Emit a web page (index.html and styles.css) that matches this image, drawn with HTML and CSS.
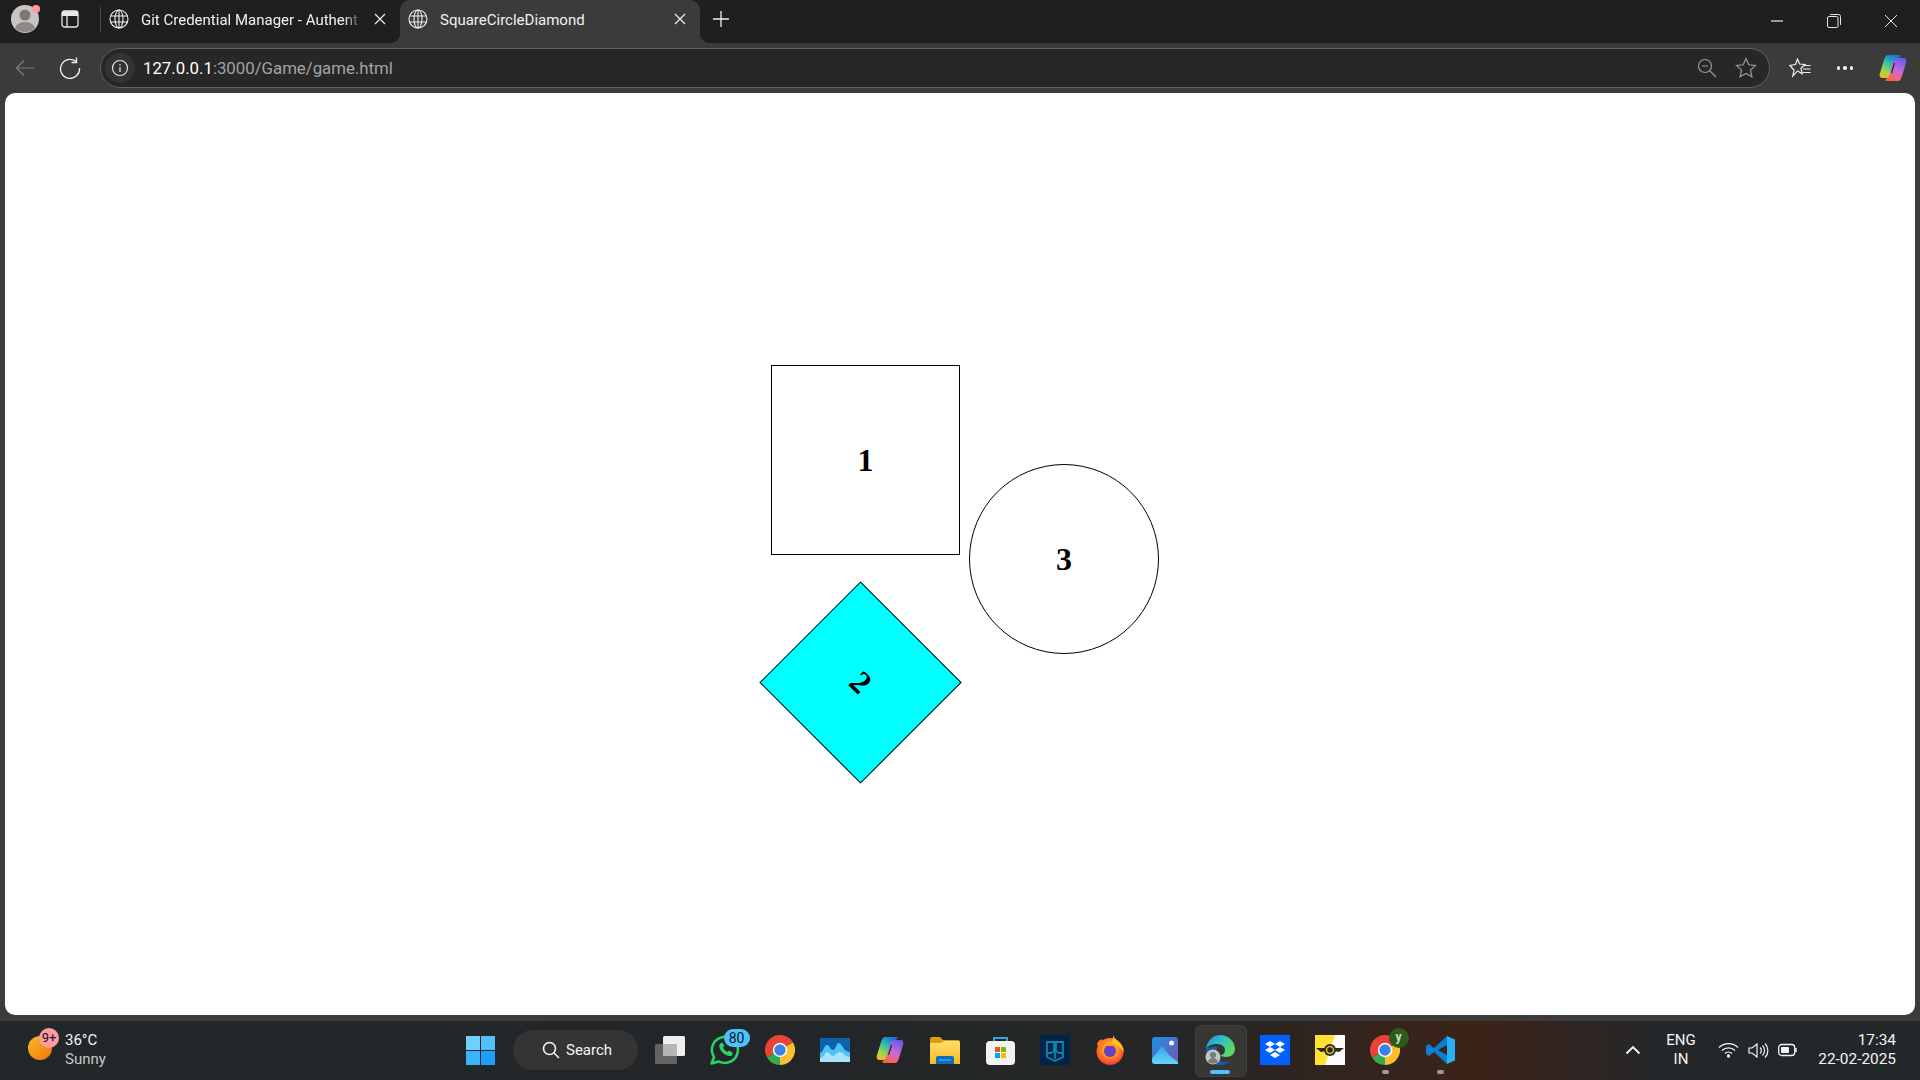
FILE: index.html
```html
<!DOCTYPE html>
<html lang="en">
  <head>
    <meta charset="UTF-8" />
    <title>SquareCircleDiamond</title>
    <link rel="stylesheet" href="styles.css">
  </head>
  <body>
    <svg class="defs" aria-hidden="true">
      <defs>
        <linearGradient id="cp-left" x1="0.7" y1="0" x2="0.2" y2="1">
          <stop offset="0" stop-color="#1b6fe0" />
          <stop offset="0.4" stop-color="#2cc3a5" />
          <stop offset="0.75" stop-color="#a6d83c" />
          <stop offset="1" stop-color="#f5b52e" />
        </linearGradient>
        <linearGradient id="cp-right" x1="0.7" y1="0" x2="0.3" y2="1">
          <stop offset="0" stop-color="#6a5ce8" />
          <stop offset="0.5" stop-color="#c469dc" />
          <stop offset="0.8" stop-color="#f0648c" />
          <stop offset="1" stop-color="#f5692a" />
        </linearGradient>
        <linearGradient id="edge-top" x1="0" y1="0" x2="1" y2="0.6">
          <stop offset="0" stop-color="#1b8fd8" />
          <stop offset="0.5" stop-color="#2fc0c8" />
          <stop offset="1" stop-color="#62d85e" />
        </linearGradient>
        <linearGradient id="ph-bg" x1="0" y1="0" x2="1" y2="1">
          <stop offset="0" stop-color="#1a8fe8" />
          <stop offset="1" stop-color="#7a55b0" />
        </linearGradient>
        <linearGradient id="ph-mt" x1="0" y1="0" x2="0" y2="1">
          <stop offset="0" stop-color="#3aa0e8" />
          <stop offset="1" stop-color="#62d8f8" />
        </linearGradient>
        <linearGradient id="folder" x1="0" y1="0" x2="0" y2="1">
          <stop offset="0" stop-color="#ffdf70" />
          <stop offset="1" stop-color="#f6b91e" />
        </linearGradient>
        <radialGradient id="fox" cx="0.5" cy="0.4" r="0.65">
          <stop offset="0.3" stop-color="#ffb020" />
          <stop offset="0.75" stop-color="#ff5a28" />
          <stop offset="1" stop-color="#e3206e" />
        </radialGradient>
        <symbol id="globe" viewBox="0 0 20 20">
          <g fill="none" stroke="currentColor" stroke-width="1.1">
            <circle cx="10" cy="10" r="9" />
            <ellipse cx="10" cy="10" rx="4" ry="9" />
            <path d="M10 1v18M1.6 7h16.8M1.6 13h16.8" />
          </g>
        </symbol>
        <symbol id="close" viewBox="0 0 12 12">
          <path d="M1 1l10 10M11 1L1 11" fill="none" stroke="currentColor" stroke-width="1.2" />
        </symbol>
        <symbol id="copilot" viewBox="0 0 28 28">
          <path fill="url(#cp-left)" d="M9 1h11c2 0 2 1 1 2-2 1-3 3-4 6l-3 12c-1 2-3 3-6 3H4c-3 0-4-2-3-5L5 6c1-3 2-5 4-5z" />
          <path fill="url(#cp-right)" d="M19 27H8c-2 0-2-1-1-2 2-1 3-3 4-6l3-12c1-2 3-3 6-3h4c3 0 4 2 3 5l-4 13c-1 3-2 5-4 5z" />
          <path fill="none" stroke="#2a2a2a" stroke-width="1.2" d="M15.500 9L12.500 19" />
        </symbol>
        <symbol id="chrome" viewBox="0 0 30 30">
          <path fill="#ea4335" d="M15 15L2 22.500A15 15 0 0 1 28 7.500z" />
          <path fill="#fbc02d" d="M15 15L28 7.500A15 15 0 0 1 15 30z" />
          <path fill="#34a853" d="M15 15L15 30A15 15 0 0 1 2 22.500z" />
          <circle cx="15" cy="15" r="7.200" fill="#fff" />
          <circle cx="15" cy="15" r="5.700" fill="#3f7fe8" />
        </symbol>
      </defs>
    </svg>

    <div id="wrap">
      <div class="tabs">
        <div class="cell-avatar">
          <svg width="30" height="30" viewBox="0 0 30 30">
            <circle cx="14" cy="15" r="14" fill="#c9c6c1" />
            <circle cx="14" cy="11" r="5.500" fill="#7d7873" />
            <path fill="#8f8a85" d="M4 24c2-5 6-6 10-6s8 1 10 6c-3 3-6 4-10 4s-7-1-10-4z" />
            <circle cx="25" cy="5" r="4" fill="#ff9a9e" />
          </svg>
        </div>
        <div class="cell-tabstrip">
          <svg width="18" height="18" viewBox="0 0 18 18">
            <rect x="1" y="1" width="16" height="16" rx="2.500" fill="none" stroke="#e8e8e8" stroke-width="1.300" />
            <path fill="#e8e8e8" d="M1 3.500A2.500 2.500 0 0 1 3.500 1h11A2.500 2.500 0 0 1 17 3.500V6H1z" />
            <path stroke="#e8e8e8" stroke-width="1.300" d="M6 6v11" />
          </svg>
        </div>
        <div class="tab-sep"></div>
        <div class="tab">
          <svg class="tab-globe"><use href="#globe" /></svg>
          <span class="tab-title tab-title-fade">Git Credential Manager - Authent</span>
          <svg class="tab-close"><use href="#close" /></svg>
        </div>
        <div class="tab tab-active">
          <svg class="tab-globe"><use href="#globe" /></svg>
          <span class="tab-title">SquareCircleDiamond</span>
          <svg class="tab-close"><use href="#close" /></svg>
        </div>
        <svg class="tab-new" viewBox="0 0 18 18">
          <path d="M9 1v16M1 9h16" fill="none" stroke="#efefef" stroke-width="1.300" />
        </svg>
        <div class="win-btns">
          <div class="win-btn">
            <svg width="14" height="14" viewBox="0 0 14 14"><path d="M1 7h12" stroke="#fff" stroke-width="1.100" /></svg>
          </div>
          <div class="win-btn">
            <svg width="14" height="14" viewBox="0 0 14 14" fill="none" stroke="#e8e8e8" stroke-width="1">
              <rect x="0.500" y="2.500" width="10.500" height="11" rx="1.500" />
              <path d="M3 .5h8.500a2 2 0 0 1 2 2V11" />
            </svg>
          </div>
          <div class="win-btn">
            <svg width="14" height="14" viewBox="0 0 14 14"><path d="M1 1l12 12M13 1L1 13" stroke="#e8e8e8" stroke-width="1" /></svg>
          </div>
        </div>
      </div>

      <div class="toolbar">
        <div class="tool-back">
          <svg width="20" height="18" viewBox="0 0 20 18" fill="none" stroke="#7d7d7d" stroke-width="1.200">
            <path d="M19 9H1.500M9 1.500L1.500 9 9 16.500" />
          </svg>
        </div>
        <div class="tool-reload">
          <svg width="22" height="22" viewBox="0 0 22 22" fill="none" stroke="#f0f0f0" stroke-width="1.300">
            <path d="M17 4.500A9.500 9.500 0 1 0 20.500 11" />
            <path d="M12.500 5.500h5v-5" />
          </svg>
        </div>
        <div class="address">
          <div class="addr-info">
            <svg width="18" height="18" viewBox="0 0 18 18" fill="none" stroke="#e4e4e4" stroke-width="1.200">
              <circle cx="9" cy="9" r="7.500" />
              <path d="M9 8v5M9 5v1.400" />
            </svg>
          </div>
          <div class="addr-url"><span class="addr-host">127.0.0.1</span>:3000/Game/game.html</div>
          <div class="addr-icons">
            <svg width="20" height="20" viewBox="0 0 20 20" fill="none" stroke="#9a9a9a" stroke-width="1.200">
              <circle cx="8" cy="8" r="6.500" />
              <path d="M5 8h6M13 13l6 6" />
            </svg>
            <svg width="22" height="22" viewBox="0 0 22 22" fill="none" stroke="#9a9a9a" stroke-width="1.200">
              <path d="M11 1.500l2.800 6.300 6.700.7-5 4.600 1.400 6.700-5.900-3.400-5.900 3.400 1.400-6.700-5-4.600 6.700-.7z" />
            </svg>
          </div>
        </div>
        <div class="tool-fav">
          <svg width="22" height="20" viewBox="0 0 22 20" fill="none" stroke="#f0f0f0" stroke-width="1.200">
            <path d="M8.500 1l2 5 5.500.5-4 3.800 1.200 5.400-4.700-2.800L3.800 18 5 12 .8 7.500 6.500 6.500z" />
            <path d="M15 7.500h6.500M14 11h7.500M13.500 14.500h8" />
          </svg>
        </div>
        <div class="tool-more">
          <span class="dot"></span><span class="dot"></span><span class="dot"></span>
        </div>
        <div class="tool-copilot">
          <svg width="28" height="28"><use href="#copilot" /></svg>
        </div>
      </div>

      <div class="page">
        <div class="shape square">1</div>
        <div class="shape diamond">2</div>
        <div class="shape circle">3</div>
      </div>

      <div class="taskbar">
        <div class="weather">
          <div class="weather-icon">
            <span class="weather-sun"></span>
            <span class="weather-badge">9+</span>
          </div>
          <div class="weather-text">
            <div>36°C</div>
            <div class="weather-sub">Sunny</div>
          </div>
        </div>

        <div class="apps">
          <div class="app">
            <svg width="29" height="29" viewBox="0 0 29 29">
              <rect width="14" height="14" fill="#6fd0fb" />
              <rect x="15" width="14" height="14" fill="#52c0fb" />
              <rect y="15" width="14" height="14" fill="#3ab4fb" />
              <rect x="15" y="15" width="14" height="14" fill="#1a9ffa" />
            </svg>
          </div>
          <div class="search">
            <svg width="18" height="18" viewBox="0 0 18 18" fill="none" stroke="#f4f4f4" stroke-width="1.600">
              <circle cx="7.500" cy="7.500" r="6" />
              <path d="M12 12l5 5" />
            </svg>
            <span>Search</span>
          </div>
          <div class="app">
            <svg width="30" height="28" viewBox="0 0 30 28">
              <rect y="8" width="22" height="20" rx="1.500" fill="#636363" />
              <rect x="8" width="22" height="20" rx="1.500" fill="#efefef" />
              <rect x="8" y="8" width="14" height="12" fill="#b5b5b5" />
            </svg>
          </div>
          <div class="app">
            <svg width="30" height="30" viewBox="0 0 30 30">
              <path fill="none" stroke="#25d366" stroke-width="2.500" stroke-linejoin="round" d="M1.500 28.500L4 22A13 13 0 1 1 9 26.500z" />
              <path fill="#25d366" d="M10 8.500c-1.500 2-.5 6 2.500 9s7 4.500 9.500 3l.5-3-3.500-2-1.500 1.500c-2-.8-3.500-2.500-4.500-4.500l1.500-1.500-2-3.500z" />
            </svg>
            <span class="badge badge-count">80</span>
          </div>
          <div class="app">
            <svg width="30" height="30"><use href="#chrome" /></svg>
          </div>
          <div class="app">
            <svg width="30" height="24" viewBox="0 0 30 24">
              <rect width="30" height="24" fill="#0b62ad" />
              <path fill="#4fc1f2" d="M0 15c3 0 4-8 7-8s3 5 6 5 3-7 6-7 4 9 11 9v10H0z" />
              <path fill="#a9e4fb" d="M0 20c4 0 5-6 7-6s4 4 6 4 4-4 7-4 5 5 10 5v5H0z" />
            </svg>
          </div>
          <div class="app">
            <svg width="28" height="28"><use href="#copilot" /></svg>
          </div>
          <div class="app">
            <svg width="30" height="27" viewBox="0 0 30 27">
              <path fill="#d99f0d" d="M0 2a2 2 0 0 1 2-2h8l3 3h15a2 2 0 0 1 2 2v6H0z" />
              <path fill="url(#folder)" d="M0 6h11l3-2h14a2 2 0 0 1 2 2v21H0z" />
              <path fill="#0f6cbd" d="M6 27v-6a2 2 0 0 1 2-2h14a2 2 0 0 1 2 2v6z" />
              <path stroke="#5ab4ee" d="M9 23h12" />
            </svg>
          </div>
          <div class="app">
            <svg width="29" height="29" viewBox="0 0 29 29">
              <path fill="none" stroke="#2aa8e8" stroke-width="2" d="M8 6V2h13v4" />
              <rect y="5" width="29" height="24" rx="4" fill="#f2f2f2" />
              <rect x="9" y="11" width="5" height="5" fill="#f25022" />
              <rect x="15" y="11" width="5" height="5" fill="#7fba00" />
              <rect x="9" y="17" width="5" height="5" fill="#00a4ef" />
              <rect x="15" y="17" width="5" height="5" fill="#ffb900" />
            </svg>
          </div>
          <div class="app">
            <svg width="30" height="30" viewBox="0 0 30 30">
              <rect width="30" height="30" fill="#02234a" />
              <path fill="none" stroke="#0e86ad" stroke-width="1.800" d="M7 7h7v9l-3 2H7zM16 7h7v11h-4l-3-2zM15 7v17M7 18v4l8 4 8-4v-4" />
            </svg>
          </div>
          <div class="app">
            <svg width="30" height="30" viewBox="0 0 30 30">
              <circle cx="15" cy="16.500" r="13.500" fill="url(#fox)" />
              <path fill="#ffc21e" d="M18 0c1 5 10 7 11 17-3-4-8-8-13-8 2-3 2-6 2-9z" />
              <path fill="#ff7a1e" d="M2 9c1-3 3-4 5-5 0 2 1 3 3 4l-5 7z" />
              <circle cx="15" cy="16" r="6" fill="#6b3fc8" />
              <path fill="#ff9a1e" d="M8 11c4-3 9-3 13 0-4 0-9 0-13 0z" />
            </svg>
          </div>
          <div class="app">
            <svg width="26" height="27" viewBox="0 0 26 27">
              <rect width="26" height="27" rx="3" fill="url(#ph-bg)" />
              <circle cx="19.500" cy="6" r="2.500" fill="#eef4fb" />
              <path fill="url(#ph-mt)" d="M0 22l10-13 8 10 8 6v-1 3H3a3 3 0 0 1-3-3z" />
            </svg>
          </div>
          <div class="app app-open">
            <svg width="30" height="30" viewBox="0 0 30 30">
              <path fill="url(#edge-top)" d="M1 14C2 6 8 0 15 0c9 0 15 7 15 14 0 5-4 8-9 8-3 0-5-1-6-2 3 0 5-2 5-5 0-3-3-6-8-6C8 9 3 10 1 14z" />
              <path fill="#0f5fb0" d="M1 14c-1 9 6 16 14 16 4 0 7-1 10-4-5 2-12 1-14-5-1-4 0-6 2-9-5 0-10 0-12 2z" />
              <circle cx="8" cy="22" r="7.500" fill="#c4c4c4" />
              <circle cx="8" cy="20" r="3" fill="#7a7a7a" />
              <path fill="#7a7a7a" d="M3 27c1-3 3-4 5-4s4 1 5 4c-3 2-7 2-10 0z" />
            </svg>
            <span class="app-bar"></span>
          </div>
          <div class="app">
            <svg width="30" height="30" viewBox="0 0 30 30">
              <rect width="30" height="30" fill="#0061fe" />
              <path fill="#fff" d="M10 6l5 3-5 3-5-3zM20 6l5 3-5 3-5-3zM10 12l5 3-5 3-5-3zM20 12l5 3-5 3-5-3zM15 17l5 3-5 3-5-3z" />
            </svg>
          </div>
          <div class="app">
            <svg width="30" height="30" viewBox="0 0 30 30">
              <rect width="30" height="30" fill="#fbfdfb" />
              <path fill="#ffe135" d="M0 0h20L10 30H0z" />
              <path fill="#2b2a1e" d="M1 13h10v3l-5 1zM29 13H19v3l5 1z" />
              <circle cx="15" cy="15" r="6" fill="#2b2a1e" />
              <circle cx="15" cy="15" r="3.500" fill="none" stroke="#d9b62e" stroke-width="1.500" />
            </svg>
          </div>
          <div class="app">
            <svg width="30" height="30"><use href="#chrome" /></svg>
            <span class="badge badge-profile">y</span>
            <span class="app-dot"></span>
          </div>
          <div class="app">
            <svg width="30" height="30" viewBox="0 0 30 30">
              <path fill="#0a7ed0" d="M22 1L9 13 4 9 1 11v8l3 2 5-4 13 12 2-8-11-6 11-6z" />
              <path fill="#2aaef5" d="M22 1l8 3.500v21L22 29z" />
            </svg>
            <span class="app-dot"></span>
          </div>
        </div>

        <div class="tray">
          <div class="tray-chev">
            <svg width="16" height="10" viewBox="0 0 16 10" fill="none" stroke="#f4f4f4" stroke-width="1.800">
              <path d="M1.500 8.500L8 2l6.500 6.500" />
            </svg>
          </div>
          <div class="tray-lang">ENG<br />IN</div>
          <div class="tray-icon">
            <svg width="21" height="16" viewBox="0 0 21 16" fill="none" stroke="#f4f4f4" stroke-width="1.300">
              <path d="M1 5.500a13.500 13.500 0 0 1 19 0M4 8.500a9.500 9.500 0 0 1 13 0M7 11.500a5 5 0 0 1 7 0" />
              <circle cx="10.500" cy="14" r="1" fill="#f4f4f4" />
            </svg>
          </div>
          <div class="tray-icon">
            <svg width="21" height="17" viewBox="0 0 21 17" fill="none" stroke="#f4f4f4" stroke-width="1.200">
              <path d="M1 6v5h3l5 4V2L4 6z" />
              <path d="M12 5.500a4 4 0 0 1 0 6M14.500 3.500a7 7 0 0 1 0 10M17 1.500a10 10 0 0 1 0 14" />
            </svg>
          </div>
          <div class="tray-icon">
            <svg width="20" height="14" viewBox="0 0 20 14">
              <rect x="0.700" y="1.500" width="16" height="11" rx="3" fill="none" stroke="#f4f4f4" stroke-width="1.300" />
              <rect x="3" y="4" width="8" height="6" rx="1" fill="#f4f4f4" />
              <path d="M18 5v4" stroke="#f4f4f4" stroke-width="1.500" />
            </svg>
          </div>
          <div class="tray-clock">17:34<br />22-02-2025</div>
        </div>
      </div>
    </div>
  </body>
</html>
```
FILE: styles.css
```css
* {
  box-sizing: border-box;
}
html,
body {
  margin: 0;
  padding: 0;
  font-family: Roboto, sans-serif;
}
.defs {
  position: absolute;
  width: 0;
  height: 0;
}
#wrap {
  display: flex;
  flex-direction: column;
  width: 1920px;
  height: 1080px;
  background: #3b3b3b;
  overflow: hidden;
}

/* tab strip */
.tabs {
  display: flex;
  align-items: stretch;
  flex: 0 0 43px;
  background: #1f1f1f;
  color: #f0f0f0;
}
.cell-avatar,
.cell-tabstrip {
  display: flex;
  align-items: center;
  justify-content: center;
  padding-bottom: 5px;
}
.cell-avatar {
  width: 50px;
  padding-left: 1px;
}
.cell-tabstrip {
  width: 40px;
}
.tab-sep {
  align-self: center;
  width: 1px;
  height: 25px;
  margin: 0 0 5px 10px;
  background: #4b4b4b;
}
.tab {
  position: relative;
  display: flex;
  align-items: center;
  width: 296px;
  padding: 0 11px 5px 8px;
  font-size: 15px;
}
.tab-active {
  width: 300px;
  margin-left: 3px;
  padding-right: 14px;
  background: #3b3b3b;
  border-radius: 10px 10px 0 0;
}
.tab-active:before,
.tab-active:after {
  content: '';
  position: absolute;
  bottom: 0;
  width: 10px;
  height: 10px;
}
.tab-active:before {
  left: -10px;
  background: radial-gradient(circle at 0 0, transparent 10px, #3b3b3b 10.5px);
}
.tab-active:after {
  right: -10px;
  background: radial-gradient(circle at 100% 0, transparent 10px, #3b3b3b 10.5px);
}
.tab-globe {
  flex: 0 0 20px;
  width: 20px;
  height: 20px;
  margin-right: 12px;
}
.tab-title {
  flex: 1;
  margin-top: 1px;
  white-space: nowrap;
}
.tab-title-fade {
  -webkit-mask-image: linear-gradient(to right, #000 92%, transparent 100%);
  mask-image: linear-gradient(to right, #000 92%, transparent 100%);
}
.tab-close {
  flex: 0 0 12px;
  width: 12px;
  height: 12px;
  margin-left: 12px;
}
.tab-new {
  align-self: center;
  width: 18px;
  height: 18px;
  margin: 0 0 5px 12px;
}
.win-btns {
  display: flex;
  margin-left: auto;
}
.win-btn {
  display: flex;
  align-items: center;
  justify-content: center;
  width: 57px;
  padding-bottom: 1px;
}
.win-btn:last-child {
  width: 58px;
}

/* toolbar */
.toolbar {
  display: flex;
  align-items: center;
  flex: 0 0 50px;
  padding-left: 5px;
}
.tool-back,
.tool-reload,
.tool-fav,
.tool-more,
.tool-copilot {
  display: flex;
  align-items: center;
  justify-content: center;
  flex-shrink: 0;
}
.tool-back {
  width: 40px;
}
.tool-reload {
  width: 50px;
  margin-right: 5px;
}
.address {
  display: flex;
  align-items: center;
  flex-shrink: 0;
  width: 1670px;
  height: 40px;
  padding: 0 8px 0 4px;
  border: 1px solid #606060;
  border-radius: 20px;
  background: #272727;
}
.addr-info {
  display: flex;
  align-items: center;
  justify-content: center;
  width: 30px;
  height: 30px;
  border-radius: 50%;
  background: #333;
}
.addr-url {
  margin-left: 8px;
  font-size: 16.8px;
  color: #a3a3a3;
}
.addr-host {
  color: #fff;
}
.addr-icons {
  display: flex;
  align-items: center;
  gap: 18px;
  margin-left: auto;
  padding-right: 4px;
}
.tool-fav {
  width: 60px;
}
.tool-more {
  gap: 3px;
  width: 30px;
}
.dot {
  width: 3.5px;
  height: 3.5px;
  border-radius: 50%;
  background: #f0f0f0;
}
.tool-copilot {
  width: 60px;
  padding-left: 6px;
}

/* page in the browser */
.page {
  position: relative;
  flex: 0 0 922px;
  margin: 0 5px 6px;
  background: #fff;
  border-radius: 10px;
}
.shape {
  position: absolute;
  display: flex;
  align-items: center;
  justify-content: center;
  border: 1px solid #000;
  font-family: 'Liberation Serif', serif;
  font-size: 32px;
  font-weight: bold;
  color: #000;
}
.square {
  left: 766px;
  top: 272px;
  width: 189px;
  height: 190px;
}
.circle {
  left: 964px;
  top: 371px;
  width: 190px;
  height: 190px;
  border-radius: 50%;
}
.diamond {
  left: 784px;
  top: 518px;
  width: 143px;
  height: 143px;
  background: #0ff;
  transform: rotate(45deg);
}

/* taskbar */
.taskbar {
  display: flex;
  align-items: center;
  flex: 0 0 59px;
  padding-bottom: 1px;
  color: #f4f4f4;
  background: linear-gradient(to right, #22272a 0, #242627 1180px, #3a2319 1450px, #3a2319 1490px, #24272a 1660px, #22272a 100%);
}
.weather {
  display: flex;
  align-items: center;
  width: 453px;
  padding-left: 28px;
}
.weather-icon {
  position: relative;
  width: 37px;
  height: 40px;
}
.weather-sun {
  position: absolute;
  left: 0;
  top: 6px;
  width: 24px;
  height: 24px;
  border-radius: 50%;
  background: linear-gradient(135deg, #f3c022, #f4720f);
}
.weather-badge {
  position: absolute;
  left: 11px;
  top: -2px;
  width: 20px;
  height: 20px;
  border-radius: 50%;
  background: #ff99a4;
  color: #111;
  font-size: 13px;
  line-height: 20px;
  text-align: center;
}
.weather-text {
  font-size: 15px;
  line-height: 19px;
}
.weather-sub {
  color: #c8c8c8;
}
.apps {
  display: flex;
  align-items: center;
}
.app {
  position: relative;
  display: flex;
  align-items: center;
  justify-content: center;
  width: 55px;
  height: 50px;
}
.app-open:before {
  content: '';
  position: absolute;
  left: 2px;
  top: 0;
  width: 50px;
  height: 50px;
  border: 1px solid #43423f;
  border-radius: 6px;
  background: #373633;
}
.app-open svg {
  position: relative;
}
.app-bar {
  position: absolute;
  left: 17px;
  bottom: 1px;
  width: 20px;
  height: 4px;
  border-radius: 2px;
  background: #4cc2ff;
}
.app-dot {
  position: absolute;
  left: 24px;
  bottom: 1px;
  width: 7px;
  height: 4px;
  border-radius: 2px;
  background: #9d9d9d;
}
.badge {
  position: absolute;
  display: block;
  border-radius: 10px;
  color: #111;
  text-align: center;
}
.badge-count {
  left: 26px;
  top: 4px;
  width: 26px;
  height: 18px;
  background: #4cc2ff;
  font-size: 14px;
  line-height: 18px;
}
.badge-profile {
  left: 31px;
  top: 3px;
  width: 20px;
  height: 20px;
  background: #2c5c1c;
  color: #cfe0b8;
  font-size: 12px;
  font-weight: bold;
  line-height: 19px;
}
.search {
  display: flex;
  align-items: center;
  gap: 6px;
  width: 125px;
  height: 40px;
  margin: 0 4.5px 0 5px;
  padding-left: 29px;
  border-radius: 20px;
  background: #343434;
  font-size: 15px;
}
.tray {
  display: flex;
  align-items: center;
  margin-left: auto;
  padding-right: 24px;
}
.tray-chev {
  display: flex;
  justify-content: center;
  width: 46px;
}
.tray-lang {
  width: 50px;
  margin-right: 7px;
  font-size: 15px;
  line-height: 19px;
  text-align: center;
}
.tray-icon {
  display: flex;
  justify-content: center;
  width: 30px;
}
.tray-clock {
  width: 93px;
  font-size: 15.4px;
  line-height: 19px;
  text-align: right;
}
```
